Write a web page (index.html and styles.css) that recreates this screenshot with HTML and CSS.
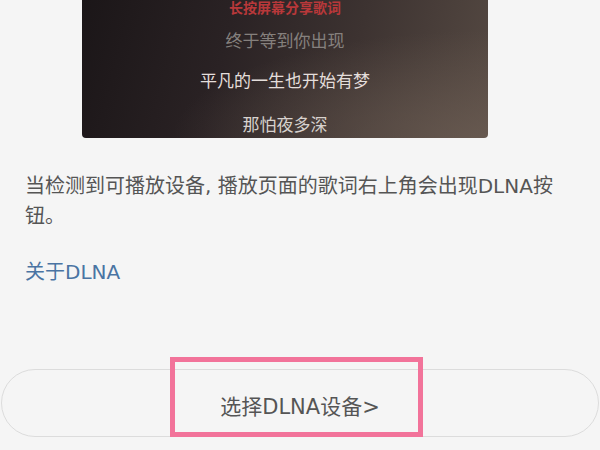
FILE: index.html
```html
<html>
<head>
	<title>DLNA</title>
	<meta charset="UTF-8">
	<link rel="stylesheet" href="styles.css">
	<meta name="viewport" content="width=device-width, initial-scale=1.0">
</head>
<body>

	<div class="lyrics-card">
		<div class="lyric share-tip">长按屏幕分享歌词</div>
		<div class="lyric faded">终于等到你出现</div>
		<div class="lyric current">平凡的一生也开始有梦</div>
		<div class="lyric next">那怕夜多深</div>
	</div>

	<div class="info">
		<p class="desc">当检测到可播放设备, 播放页面的歌词右上角会出现DLNA按钮。</p>
		<a class="about-link" href="#">关于DLNA</a>
	</div>

	<div class="select-btn">
		<span class="select-label">选择DLNA设备&gt;</span>
		<div class="highlight-box"></div>
	</div>

</body>
</html>
```

FILE: styles.css
```css
* {
	margin: 0;
	padding: 0;
	box-sizing: border-box;
}

body {
	background: #f5f5f5;
	font-family: "DejaVu Sans", "Noto Sans CJK SC", sans-serif;
	overflow: hidden;
}

.lyrics-card {
	width: 406px;
	height: 138px;
	margin-left: 82px;
	border-radius: 0 0 4px 4px;
	overflow: hidden;
	text-align: center;
	background:
		radial-gradient(ellipse at 100% 100%, rgba(110, 95, 85, 0.7) 0%, rgba(110, 95, 85, 0) 55%),
		linear-gradient(105deg, #1b1618 0%, #2a2224 35%, #3d3331 65%, #564a43 100%);
}

.lyric {
	font-family: "Noto Sans CJK SC", sans-serif;
	line-height: 24px;
}

.share-tip {
	margin-top: -5px;
	font-size: 14px;
	font-weight: bold;
	color: #b8383a;
}

.faded {
	margin-top: 9px;
	font-size: 17px;
	color: #85807d;
}

.current {
	margin-top: 16px;
	font-size: 17px;
	color: #e4dedb;
}

.next {
	margin-top: 20px;
	font-size: 17px;
	color: #d8d2ce;
}

.info {
	padding: 33px 40px 0 25px;
}

.desc {
	font-size: 20px;
	line-height: 30px;
	color: #555555;
}

.about-link {
	display: block;
	margin-top: 26px;
	font-size: 20px;
	line-height: 30px;
	color: #4a74a3;
	text-decoration: none;
}

.select-btn {
	position: relative;
	margin: 82px 1px 0 1px;
	height: 68px;
	border: 1px solid #dcdcdc;
	border-radius: 34px;
	display: flex;
	align-items: center;
	justify-content: center;
	padding-top: 4px;
}

.select-label {
	font-size: 21px;
	color: #555555;
}

.highlight-box {
	position: absolute;
	left: 168px;
	top: -13px;
	width: 253px;
	height: 80px;
	border: 5px solid #f2739a;
}
```
